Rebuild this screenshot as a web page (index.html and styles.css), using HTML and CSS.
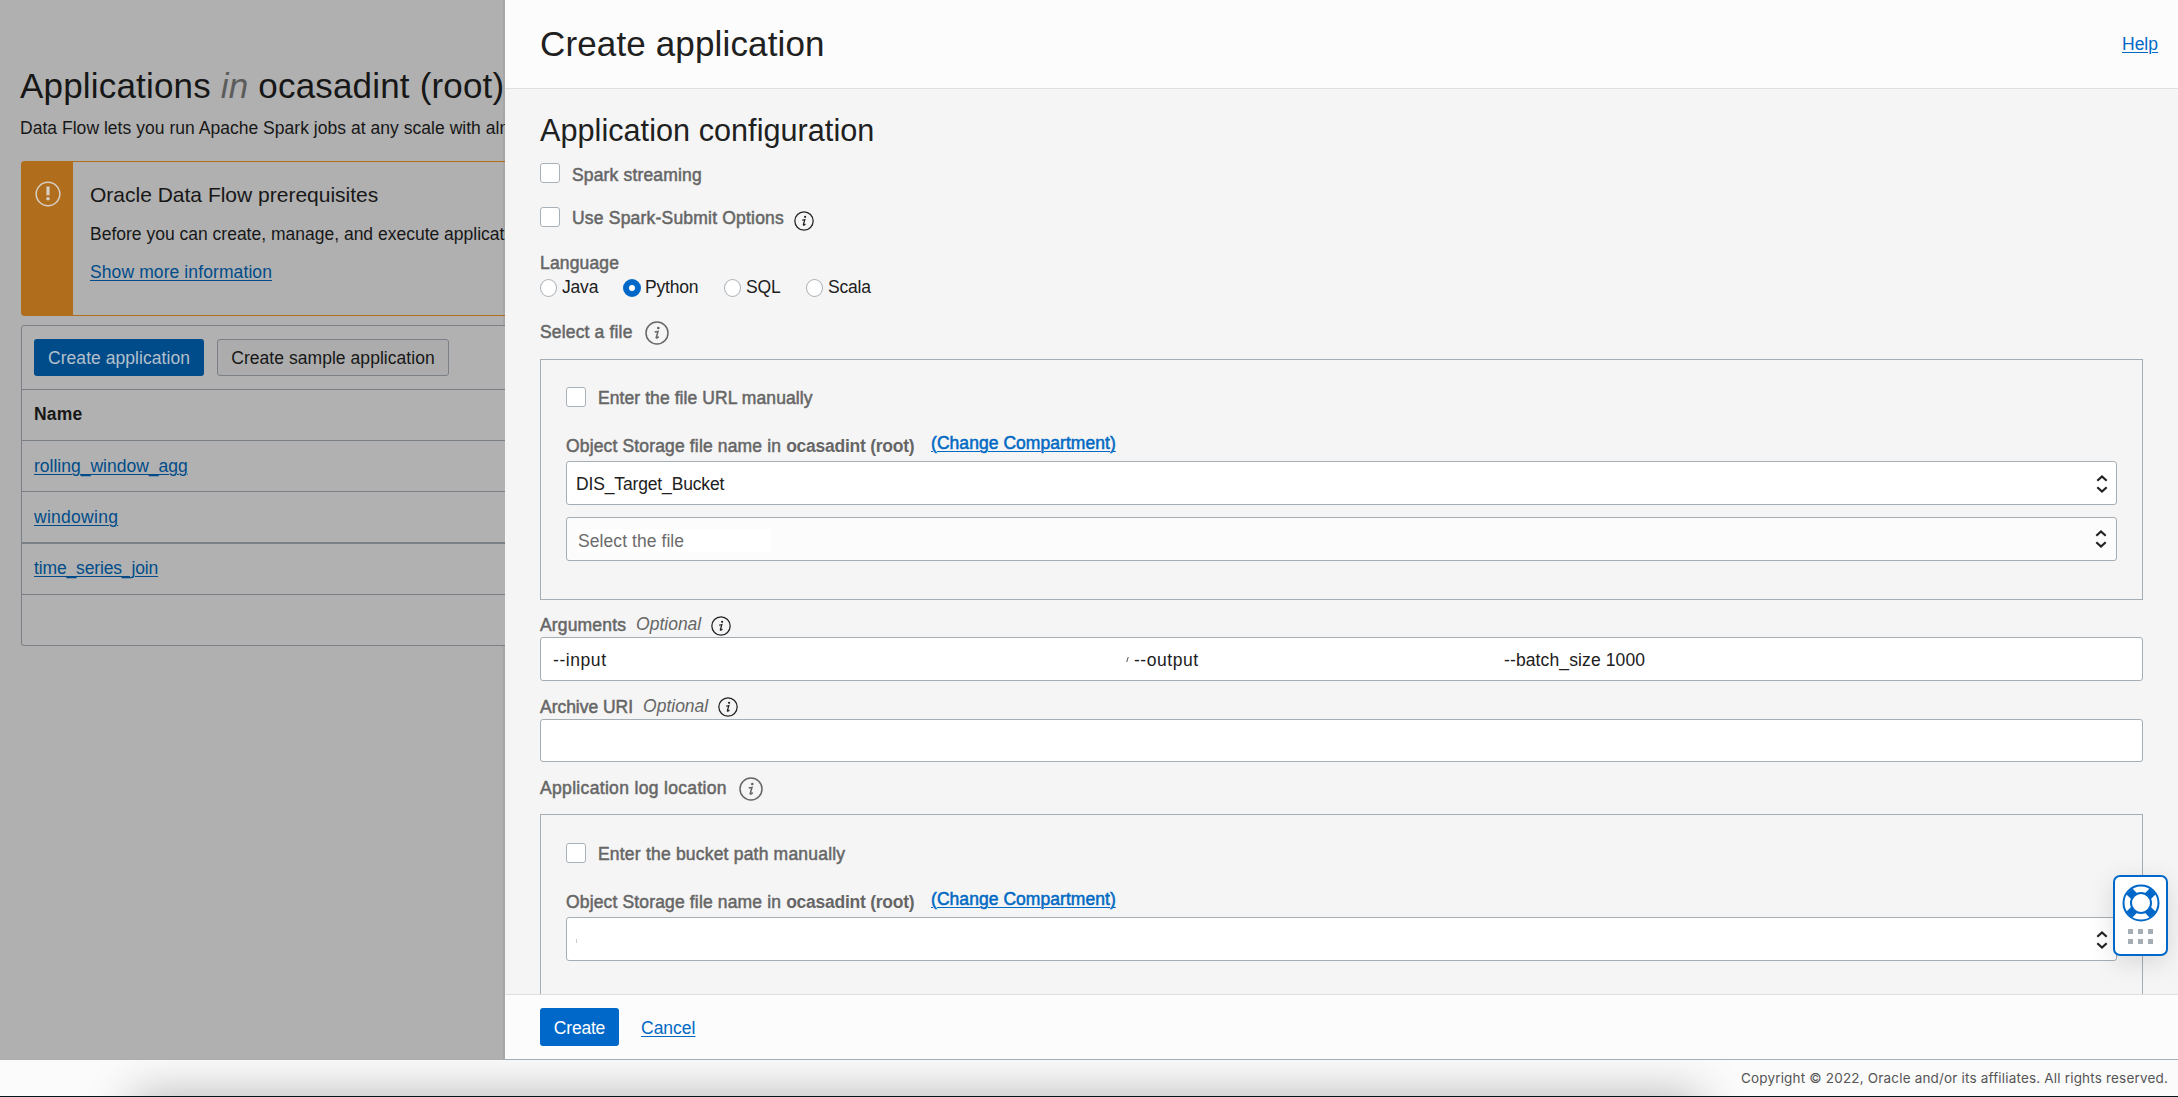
FILE: index.html
```
<!DOCTYPE html>
<html lang="en">
<head>
<meta charset="utf-8">
<title>Create application</title>
<link rel="stylesheet" href="styles.css">
</head>
<body>
<svg class="defs" width="0" height="0">
  <symbol id="info" viewBox="0 0 24 24">
    <circle cx="12" cy="12" r="11" fill="none" stroke="currentColor" stroke-width="1.5"/>
    <circle cx="13.3" cy="7" r="1.35" fill="currentColor"/>
    <path d="M9.7 11.1 13 10.4 11.3 16.2C11 17.4 11.6 17.5 13.7 15.6" fill="none" stroke="currentColor" stroke-width="1.5"/>
  </symbol>
  <symbol id="updown" viewBox="0 0 12 20">
    <path d="M1.3 6.7 6 2.5l4.7 4.2M1.3 13.3 6 17.5l4.7-4.2" fill="none" stroke="#222" stroke-width="2.2"/>
  </symbol>
</svg>
<div class="workspace">
  <main class="page">
    <h1 class="page-title">Applications <em>in</em> ocasadint (root)</h1>
    <p class="page-desc">Data Flow lets you run Apache Spark jobs at any scale with alm</p>
    <section class="alert">
      <div class="alert-side">
        <svg width="26" height="26" viewBox="0 0 26 26"><circle cx="13" cy="13" r="11.8" fill="none" stroke="#d6cfc4" stroke-width="1.5"/><path d="M11.4 5.5h3.2v8.7h-3.2zM11.4 16.3h3.2v3h-3.2z" fill="#d6cfc4"/></svg>
      </div>
      <div class="alert-body">
        <h2>Oracle Data Flow prerequisites</h2>
        <p>Before you can create, manage, and execute applicat</p>
        <a class="link">Show more information</a>
      </div>
    </section>
    <section class="table">
      <div class="toolbar">
        <button class="btn primary">Create application</button>
        <button class="btn plain">Create sample application</button>
      </div>
      <div class="row head">Name</div>
      <div class="row"><a class="link">rolling_window_agg</a></div>
      <div class="row thick"><a class="link wide">windowing</a></div>
      <div class="row last"><a class="link tight">time_series_join</a></div>
      <div class="row blank"></div>
    </section>
  </main>
  <aside class="drawer">
    <header class="drawer-head">
      <h1>Create application</h1>
      <a class="link help">Help</a>
    </header>
    <div class="drawer-body">
      <h2 class="section-title">Application configuration</h2>
      <div class="check"><i class="box"></i><span class="label">Spark streaming</span></div>
      <div class="check second"><i class="box"></i><span class="label">Use Spark-Submit Options</span><svg class="info small"><use href="#info"/></svg></div>
      <div class="field-label language">Language</div>
      <div class="radios">
        <span class="radio java"><i></i>Java</span>
        <span class="radio python on"><i></i>Python</span>
        <span class="radio sql"><i></i>SQL</span>
        <span class="radio"><i></i>Scala</span>
      </div>
      <div class="field-label select-file">Select a file<svg class="info"><use href="#info"/></svg></div>
      <section class="group file-group">
        <div class="check"><i class="box"></i><span class="label">Enter the file URL manually</span></div>
        <div class="compartment"><span class="label">Object Storage file name in <b>ocasadint (root)</b></span><a class="link">(Change Compartment)</a></div>
        <div class="select"><span class="tight">DIS_Target_Bucket</span><svg class="arrows"><use href="#updown"/></svg></div>
        <div class="select empty"><span class="placeholder">Select the file</span><svg class="arrows"><use href="#updown"/></svg></div>
      </section>
      <div class="field-label arguments">Arguments<em>Optional</em><svg class="info small"><use href="#info"/></svg></div>
      <div class="input"><span class="arg-in">--input</span><i class="tick"></i><span class="arg-out">--output</span><span class="arg-batch">--batch_size 1000</span></div>
      <div class="field-label archive"><span>Archive URI</span><em>Optional</em><svg class="info small"><use href="#info"/></svg></div>
      <div class="input uri"></div>
      <div class="field-label log">Application log location<svg class="info"><use href="#info"/></svg></div>
      <section class="group log-group">
        <div class="check"><i class="box"></i><span class="label">Enter the bucket path manually</span></div>
        <div class="compartment"><span class="label">Object Storage file name in <b>ocasadint (root)</b></span><a class="link">(Change Compartment)</a></div>
        <div class="select"><i class="speck"></i><svg class="arrows"><use href="#updown"/></svg></div>
      </section>
    </div>
    <footer class="drawer-foot">
      <button class="btn create">Create</button>
      <a class="link">Cancel</a>
    </footer>
  </aside>
</div>
<footer class="site-foot">
  <div class="foot-shadow"></div>
  <span>Copyright © 2022, Oracle and/or its affiliates. All rights reserved.</span>
</footer>
<div class="support">
  <svg width="38" height="38" viewBox="0 0 38 38">
    <circle cx="19" cy="19" r="14" fill="none" stroke="#fff" stroke-width="9"/>
    <g fill="none" stroke="#0068c8" stroke-width="8.4">
      <path d="M7.2 7.2 12.6 12.6M30.8 7.2 25.4 12.6M7.2 30.8 12.6 25.4M30.8 30.8 25.4 25.4"/>
    </g>
    <circle cx="19" cy="19" r="17.5" fill="none" stroke="#0068c8" stroke-width="2"/>
    <circle cx="19" cy="19" r="10" fill="#fff" stroke="#0068c8" stroke-width="2"/>
  </svg>
  <div class="dots"><i></i><i></i><i></i><i></i><i></i><i></i></div>
</div>
</body>
</html>
```
FILE: styles.css
```
* { box-sizing: border-box; }
body {
  margin: 0;
  height: 1097px;
  overflow: hidden;
  display: flex;
  flex-direction: column;
  background: #fbfbfb;
  font: 17.5px/24px "Liberation Sans", Arial, sans-serif;
  color: #202020;
}
h1, h2, p { margin: 0; font-weight: 400; }
.defs { position: absolute; }
.link { color: #0069c4; text-decoration: underline; text-decoration-thickness: 1px; text-underline-offset: 2px; }
.workspace { display: flex; height: 1060px; }

/* dimmed page behind the drawer */
.page {
  width: 505px;
  padding: 56px 0 0 21px;
  overflow: hidden;
  white-space: nowrap;
  background: #b0b0b0;
  box-shadow: inset -2px 0 #a6a6a6;
  border-bottom: 1px solid #acadaf;
  color: #171717;
}
.page .link { color: #004c8a; }
.page-title { margin-left: -1px; font-size: 35px; line-height: 60px; letter-spacing: .18px; }
.page-title em { color: #5c5c5c; }
.page-desc { margin-left: -1px; line-height: 24px; letter-spacing: .03px; }
.alert {
  display: flex;
  width: 900px;
  height: 155px;
  margin-top: 21px;
  border: 1px solid #b06d1c;
  border-radius: 3px;
}
.alert-side { width: 51px; padding: 19px 0 0 13px; background: #b06d1c; }
.alert-body { padding: 20px 0 0 17px; }
.alert-body h2 { font-size: 21px; line-height: 26px; }
.alert-body p { margin: 14px 0; }
.alert-body .link { letter-spacing: .1px; }
.table {
  width: 900px;
  margin-top: 9px;
  border: 1px solid #7b7f86;
  border-radius: 3px;
  background: #b1b1b1;
}
.toolbar { display: flex; gap: 13px; height: 64px; padding: 13px 12px; border-bottom: 1px solid #7b7f86; }
.btn {
  height: 37px;
  padding: 0;
  border: 0;
  border-radius: 3px;
  font: inherit;
  letter-spacing: .05px;
}
.btn.primary { width: 170px; background: #004b8a; color: #b4c0ca; }
.btn.plain { width: 232px; background: #acacac; color: #171717; border: 1px solid #7b7f86; }
.row { height: 51px; padding-left: 12px; line-height: 51px; border-bottom: 1px solid #7b7f86; }
.row.head { line-height: 49px; font-weight: 700; letter-spacing: .2px; }
.row.thick { height: 52px; border-bottom-width: 2px; }
.row.last { line-height: 49px; }
.row.blank { height: 50px; border: 0; }
.wide { letter-spacing: .28px; }
.tight { letter-spacing: -.15px; }

.drawer { flex: 1; display: flex; flex-direction: column; background: #f5f5f5; border-bottom: 1px solid #a6aeb5; }
.drawer-head {
  display: flex;
  justify-content: space-between;
  height: 89px;
  padding: 0 20px 0 35px;
  background: #fcfcfc;
  border-bottom: 1px solid #dfdfdf;
}
.drawer-head h1 { font-size: 35px; line-height: 87px; letter-spacing: .14px; }
.help { line-height: 89px; }
.drawer-body { flex: 1; min-height: 0; overflow: hidden; padding: 12px 35px 0; }
.section-title { height: 62px; font-size: 30.6px; line-height: 58px; letter-spacing: .04px; }
.label, .field-label { color: #666; letter-spacing: .16px; -webkit-text-stroke: .5px currentColor; }
.check { display: flex; height: 24px; }
.check.second { margin-top: 20px; }
.second .label { letter-spacing: .2px; line-height: 23px; }
.box { width: 20px; height: 20px; margin-right: 12px; border: 1px solid #a9b1b8; border-radius: 3px; background: #fff; }
.info { width: 24px; height: 24px; margin-left: 12px; -webkit-text-stroke: 0; }
.info.small { width: 20px; height: 20px; margin-left: 10px; color: #222; stroke-width: 2; }
.second .info { margin-top: 4px; }
.field-label { display: flex; height: 24px; }
.language { margin-top: 20px; }
.radios { display: flex; height: 25px; padding-top: 1px; }
.radio { display: flex; letter-spacing: -.2px; line-height: 23px; }
.radio i { width: 17px; height: 18px; margin: 3px 5px 0 0; border: 1px solid #a9b1b8; border-radius: 50%; background: #fff; }
.java { width: 83px; }
.python { width: 101px; }
.sql { width: 82px; }
.radio.on i { width: 18px; border: 6px solid #0068c8; margin-right: 4px; }
.select-file { margin-top: 20px; }
.select-file .info, .log .info { margin-top: 1px; }
.group { border: 1px solid #a6aeb5; padding: 27px 25px 0; }
.file-group { height: 241px; margin-top: 15px; }
.group .check { line-height: 22px; }
.file-group .check .label { letter-spacing: .08px; }
.compartment { display: flex; margin-top: 23px; height: 27px; }
.compartment .label { width: 365px; letter-spacing: .15px; white-space: nowrap; }
.compartment b { letter-spacing: -.25px; -webkit-text-stroke: 0; }
.compartment .link { height: 18px; line-height: 18px; letter-spacing: .05px; -webkit-text-stroke: .5px currentColor; }
.select, .input { display: flex; height: 44px; border: 1px solid #a6aeb5; border-radius: 3px; background: #fff; line-height: 44px; }
.select { justify-content: space-between; padding: 0 8px 0 9px; }
.select.empty { margin-top: 12px; padding-right: 9px; background: #fcfcfc; }
.select.empty .arrows { margin-top: 11px; }
.placeholder { width: 195px; height: 23px; margin-top: 11px; padding-left: 2px; line-height: 25px; background: #fff; color: #6b6b6b; letter-spacing: .07px; }
.arrows { width: 12px; height: 20px; margin-top: 12px; }
.field-label em { margin: -1px 0 1px 10px; letter-spacing: 0; -webkit-text-stroke: 0; }
.arguments { margin-top: 13px; }
.arguments .info { margin-top: 3px; }
.archive { margin-top: 14px; letter-spacing: -.03px; }
.archive .info { margin-top: 2px; }
.uri { height: 43px; }
.arg-in { width: 574px; margin-left: 12px; letter-spacing: .57px; }
.tick { width: 1px; height: 5px; margin: 19px 6px 0 0; background: #555; transform: skewX(-17deg); }
.arg-out { width: 370px; letter-spacing: .53px; }
.arg-batch { letter-spacing: .12px; }
.log { margin-top: 14px; letter-spacing: .33px; }
.log-group { height: 241px; margin-top: 14px; padding-top: 28px; }
.log-group .check .label { letter-spacing: .2px; line-height: 23px; }
.speck { width: 1px; height: 4px; margin-top: 21px; background: #ccc; }
.drawer-foot { display: flex; height: 65px; padding: 13px 35px; background: #fcfcfc; border-top: 1px solid #dfdfdf; }
.create { width: 79px; height: 38px; padding-top: 2px; margin-right: 22px; background: #0068c8; color: #fff; letter-spacing: -.2px; }
.drawer-foot .link { line-height: 41px; }

.site-foot {
  position: relative;
  display: flex;
  justify-content: flex-end;
  height: 37px;
  padding-right: 10px;
  overflow: hidden;
  border-bottom: 1px solid #04151d;
  font: 13.5px/37px Inter, sans-serif;
  letter-spacing: .18px;
  color: #555;
}
.foot-shadow { position: absolute; left: 140px; top: 43px; width: 1552px; height: 60px; box-shadow: 0 0 48px 8px rgba(0, 0, 0, .28); }
.site-foot span { position: relative; }

/* floating support launcher */
.support {
  position: absolute;
  left: 2113px;
  top: 875px;
  width: 55px;
  height: 81px;
  padding-top: 7px;
  border: 2px solid #0068c8;
  border-radius: 7px;
  background: #fff;
  box-shadow: 0 6px 26px rgba(0, 0, 0, .12);
  text-align: center;
  line-height: 0;
}
.dots { display: grid; grid-template-columns: repeat(3, 5px); gap: 5px; justify-content: center; margin-top: 7px; }
.dots i { height: 5px; background: #a6aeb5; }
```
